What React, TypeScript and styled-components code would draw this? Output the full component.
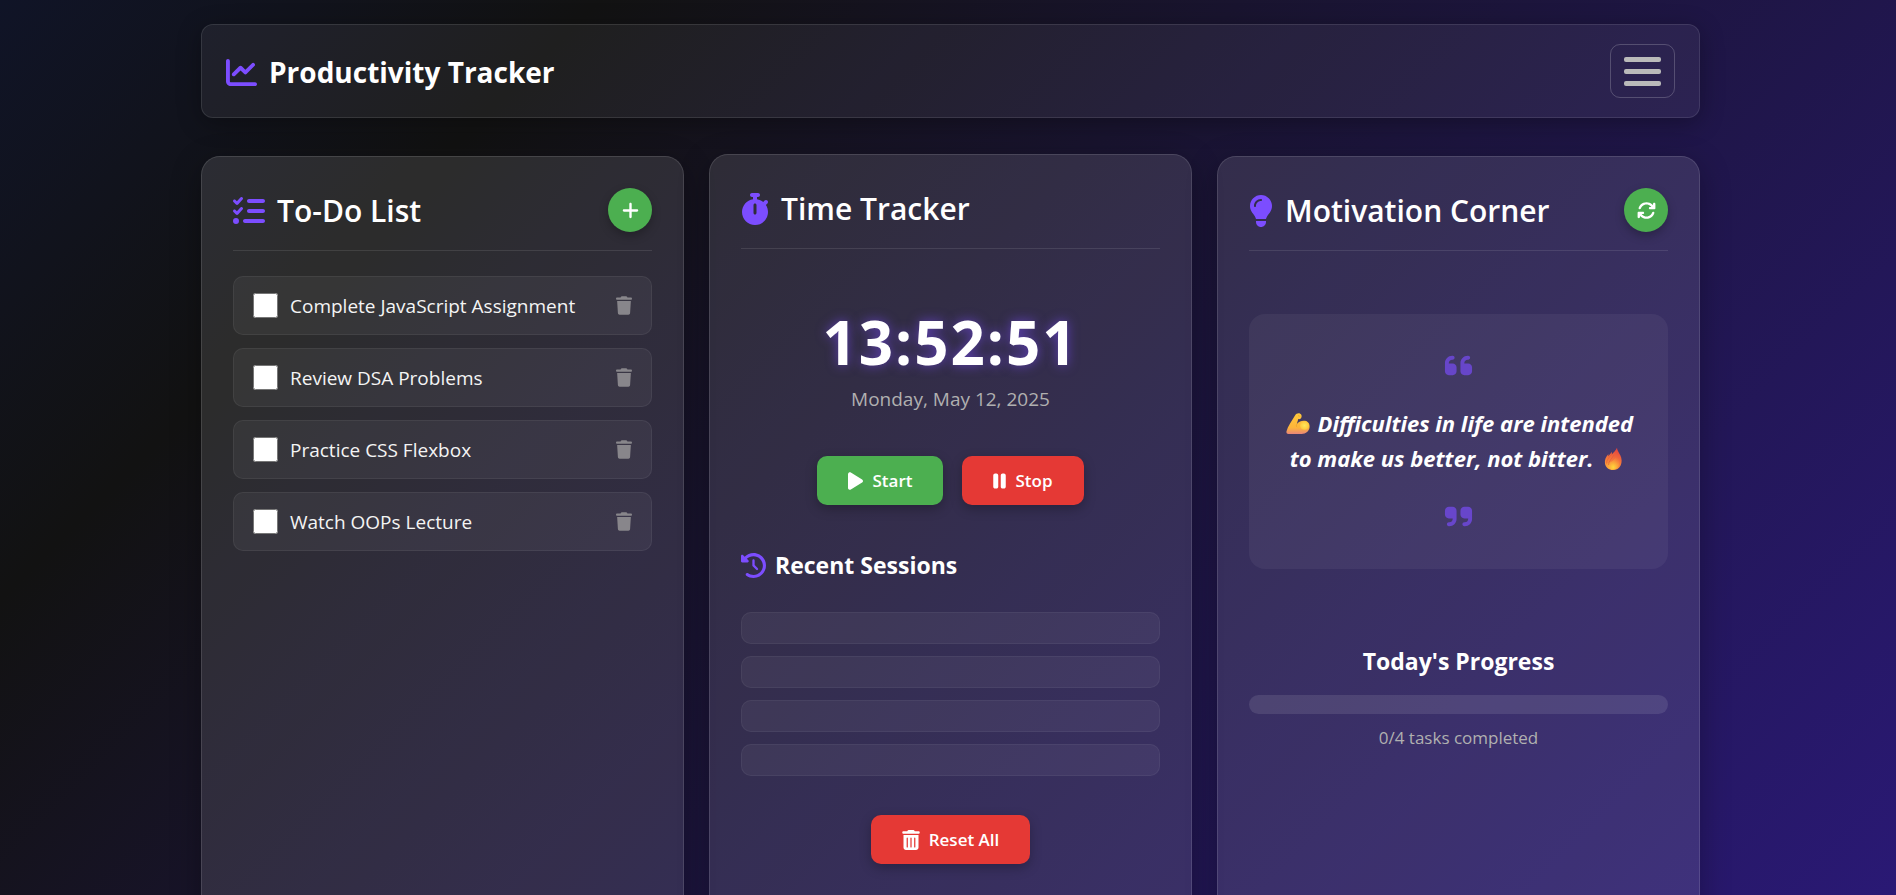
import React, { useState } from "react";
import styled, { createGlobalStyle, css } from "styled-components";
import {
  FaArrowsRotate,
  FaChartLine,
  FaClockRotateLeft,
  FaLightbulb,
  FaListCheck,
  FaPause,
  FaPlay,
  FaPlus,
  FaQuoteLeft,
  FaQuoteRight,
  FaStopwatch,
  FaTrash,
  FaTrashCan,
} from "react-icons/fa6";

const color = {
  accent: "#7c4dff",
  green: "#4caf50",
  red: "#e53935",
  text: "#ffffff",
  muted: "#b0b0b0",
  line: "rgba(255, 255, 255, 0.1)",
};

const GlobalStyle = createGlobalStyle`
  *, *::before, *::after { box-sizing: border-box; }
  body {
    margin: 0;
    background: #121212;
    color: ${color.text};
    font-family: "Open Sans", "Noto Sans", sans-serif;
    font-size: 19px;
  }
  h1, h2, h3, p, ul, blockquote { margin: 0; padding: 0; }
  ul { list-style: none; }
  button { font: inherit; color: inherit; cursor: pointer; }
  svg { display: block; flex: none; }
`;

/* Icons whose drawing is narrower than it is tall get a matching box. */
const StopwatchIcon = styled(FaStopwatch)`width: 28px;`;
const BulbIcon = styled(FaLightbulb)`width: 24px;`;
const PlayIcon = styled(FaPlay)`width: 15px;`;
const PauseIcon = styled(FaPause)`width: 13px;`;
const ResetIcon = styled(FaTrashCan)`width: 18px;`;
const DeleteIcon = styled(FaTrash)`width: 16px;`;

const Page = styled.div`
  min-height: 100vh;
  padding: 24px 0 24px 5px;
  background: linear-gradient(135deg, #101427 0, #121212 424px, #311b92 2432px);
`;

const Container = styled.div`
  width: calc(100% - 48px);
  max-width: 1499px;
  margin: 0 auto;
  display: flex;
  flex-direction: column;
  gap: 38px;
`;

const TopBar = styled.header`
  display: flex;
  align-items: center;
  justify-content: space-between;
  padding: 19px 24px;
  border: 1px solid ${color.line};
  border-radius: 12px;
  background: rgba(255, 255, 255, 0.06);
  box-shadow: 0 5px 25px rgba(0, 0, 0, 0.3);
`;

const Brand = styled.h1`
  display: flex;
  align-items: center;
  gap: 12px;
  padding-top: 2px;
  font-size: 28px;
  line-height: 40px;
  font-weight: 700;
  white-space: nowrap;

  svg { color: ${color.accent}; }
`;

const MenuButton = styled.button`
  display: flex;
  flex-direction: column;
  align-items: center;
  justify-content: center;
  gap: 7px;
  width: 65px;
  height: 54px;
  padding: 0;
  border: 1px solid rgba(255, 255, 255, 0.2);
  border-radius: 10px;
  background: transparent;
`;

const MenuBar = styled.span`
  width: 37px;
  height: 5px;
  border-radius: 2px;
  background: #bababa;
`;

const Columns = styled.main`
  display: grid;
  grid-template-columns: repeat(3, minmax(0, 1fr));
  gap: 25px;
`;

const Card = styled.section<{ $lifted?: boolean }>`
  min-height: 780px;
  padding: 31px;
  border: 1px solid rgba(255, 255, 255, 0.12);
  border-radius: 19px;
  background: rgba(255, 255, 255, 0.11);
  box-shadow: 0 8px 31px rgba(0, 0, 0, 0.3);
  ${(p) => p.$lifted && css`transform: translateY(-2px);`}
`;

const CardHeader = styled.div`
  display: flex;
  align-items: center;
  justify-content: space-between;
  min-height: 63px;
  padding-bottom: 18px;
  border-bottom: 1px solid ${color.line};
`;

const CardTitle = styled.h2`
  display: flex;
  align-items: center;
  gap: 12px;
  padding-top: 2px;
  font-size: 30px;
  line-height: 42px;
  font-weight: 600;
  white-space: nowrap;

  svg { color: ${color.accent}; }
`;

const RoundButton = styled.button`
  display: grid;
  place-items: center;
  width: 44px;
  height: 44px;
  padding: 0;
  border: 0;
  border-radius: 50%;
  background: ${color.green};
  box-shadow: 0 4px 10px rgba(0, 0, 0, 0.25);
`;

const TaskList = styled.ul`
  display: flex;
  flex-direction: column;
  gap: 13px;
  margin-top: 25px;
`;

const Task = styled.li`
  display: flex;
  align-items: center;
  justify-content: space-between;
  height: 59px;
  padding: 0 19px;
  border: 1px solid rgba(255, 255, 255, 0.06);
  border-radius: 10px;
  background: rgba(255, 255, 255, 0.05);
`;

const TaskLabel = styled.label`
  display: flex;
  align-items: center;
  gap: 12px;
  color: #f4f4f4;
  white-space: nowrap;
`;

const TaskCheck = styled.input`
  width: 25px;
  height: 25px;
  margin: 0;
`;

const DeleteButton = styled.button`
  display: flex;
  padding: 0;
  border: 0;
  background: none;
  color: #88868b;
`;

const ClockPanel = styled.div`
  display: flex;
  flex-direction: column;
  align-items: center;
  padding: 56px 0 43px;
`;

const Clock = styled.time`
  font-size: 60px;
  line-height: 75px;
  font-weight: 700;
  letter-spacing: 2px;
  text-shadow: 0 0 12px rgba(124, 77, 255, 0.6);
`;

const DateLine = styled.p`
  margin-top: 5px;
  line-height: 28px;
  color: ${color.muted};
`;

const ButtonRow = styled.div`
  display: flex;
  justify-content: center;
  gap: 19px;
`;

const ActionButton = styled.button<{ $tone: "green" | "red" }>`
  display: flex;
  align-items: center;
  gap: 9px;
  height: 49px;
  padding: 0 31px;
  border: 0;
  border-radius: 10px;
  background: ${(p) => color[p.$tone]};
  box-shadow: 0 4px 12px rgba(0, 0, 0, 0.25);
  font-size: 17px;
  font-weight: 600;
`;

const SubTitle = styled.h3`
  display: flex;
  align-items: center;
  gap: 9px;
  font-size: 23px;
  line-height: 32px;
  font-weight: 700;

  svg { color: ${color.accent}; }
`;

const Sessions = styled.div`
  padding-top: 44px;
`;

const SessionList = styled.ul`
  display: flex;
  flex-direction: column;
  gap: 12px;
  margin: 31px 0 39px;
`;

const SessionRow = styled.li`
  height: 32px;
  border: 1px solid rgba(255, 255, 255, 0.05);
  border-radius: 10px;
  background: rgba(255, 255, 255, 0.05);
`;

const Quote = styled.blockquote`
  display: flex;
  flex-direction: column;
  align-items: center;
  gap: 25px;
  margin-top: 63px;
  padding: 36px 24px 37px;
  border-radius: 16px;
  background: rgba(255, 255, 255, 0.05);

  > svg { color: ${color.accent}; opacity: 0.65; }
`;

const QuoteText = styled.p`
  font-size: 22px;
  line-height: 35px;
  font-weight: 700;
  font-style: italic;
  text-align: center;
  white-space: nowrap;

  svg { display: inline-block; margin: 0 2px; vertical-align: -4px; }
`;

const Progress = styled.div`
  display: flex;
  flex-direction: column;
  align-items: center;
  margin-top: 76px;
`;

const ProgressTrack = styled.div`
  width: 100%;
  height: 19px;
  margin: 18px 0 10px;
  border-radius: 10px;
  overflow: hidden;
  background: rgba(255, 255, 255, 0.1);
`;

const ProgressFill = styled.div`
  height: 100%;
  background: ${color.green};
`;

const ProgressText = styled.p`
  font-size: 17px;
  line-height: 28px;
  color: ${color.muted};
`;

const FlexedArm = () => (
  <svg width="24" height="24" viewBox="0 0 24 24" role="img" aria-label="Flexed arm">
    <defs>
      <linearGradient id="arm" x1="0" y1="0" x2="0" y2="1">
        <stop offset="0" stopColor="#ffc93c" />
        <stop offset="0.7" stopColor="#fdb43a" />
        <stop offset="1" stopColor="#e8857a" />
      </linearGradient>
      <radialGradient id="bicep">
        <stop offset="0" stopColor="#ffe65a" />
        <stop offset="1" stopColor="#ffc83d" />
      </radialGradient>
    </defs>
    <path
      fill="url(#arm)"
      d="M9 3.600C10 1.600 12.500.8 14.200 1.700c1.600.9 1.900 3 .8 4.500-.7.900-1.800 1.200-2.700.9L10.800 12c2.300-2.700 5.400-3.700 8.200-3.200 3 .6 4.900 3.200 4.600 6.200-.4 4-3.600 7-8 7H2.400C.9 22 .1 20.700.5 19.200 1.800 14.500 5.500 9.500 9 3.600z"
    />
    <ellipse cx="18.500" cy="13.500" rx="4.500" ry="4.200" fill="url(#bicep)" />
    <path fill="none" stroke="#e8a02c" strokeWidth="0.800" d="M10.800 12c-.6 1-.5 2.200.2 3.200M12 3.800c.8-.3 1.600 0 1.900.7" />
  </svg>
);

const Fire = () => (
  <svg width="24" height="24" viewBox="0 0 24 24" role="img" aria-label="Fire">
    <defs>
      <linearGradient id="flame" x1="0.700" y1="0" x2="0.400" y2="1">
        <stop offset="0" stopColor="#e2403f" />
        <stop offset="0.550" stopColor="#f4743b" />
        <stop offset="1" stopColor="#fda63c" />
      </linearGradient>
      <radialGradient id="core" cx="0.500" cy="0.850" r="0.700">
        <stop offset="0" stopColor="#ffd83a" />
        <stop offset="1" stopColor="#fba23a" stopOpacity="0" />
      </radialGradient>
    </defs>
    <path
      fill="url(#flame)"
      d="M16 .8c0 2.400 1.800 4.600 3.300 7.400 1.600 3.200 1.900 7.100.3 10.200-1.500 2.900-4.300 4.600-7.600 4.600-4.300 0-7.300-2.600-8-6.300-.6-3.600.8-6.900 3.400-9.700L7.300 9.200 11 4.800l-.2 2.600C12.900 5.500 14.900 3.300 16 .8z"
    />
    <path
      fill="url(#core)"
      d="M16.500 7c.8 3 2.300 5.500 1.900 9-.4 4-3 6.500-6.400 6.500-3.600 0-6.200-2.500-6-6C9.500 16 14.500 12.500 16.500 7z"
    />
    <path
      fill="none"
      stroke="#e2573a"
      strokeWidth="0.600"
      d="M5.500 16.500C5.500 13 8 10.500 10.500 7.500M7.500 18C7.500 14 11 11.500 13 8"
    />
  </svg>
);

const initialTasks = [
  "Complete JavaScript Assignment",
  "Review DSA Problems",
  "Practice CSS Flexbox",
  "Watch OOPs Lecture",
].map((title, id) => ({ id, title, done: false }));

export default function App() {
  const [tasks, setTasks] = useState(initialTasks);
  const done = tasks.filter((t) => t.done).length;

  const toggle = (id: number) =>
    setTasks(tasks.map((t) => (t.id === id ? { ...t, done: !t.done } : t)));
  const remove = (id: number) => setTasks(tasks.filter((t) => t.id !== id));

  return (
    <>
      <GlobalStyle />
      <Page>
        <Container>
          <TopBar>
            <Brand>
              <FaChartLine size={31} />
              Productivity Tracker
            </Brand>
            <MenuButton type="button" aria-label="Menu">
              <MenuBar />
              <MenuBar />
              <MenuBar />
            </MenuButton>
          </TopBar>

          <Columns>
            <Card>
              <CardHeader>
                <CardTitle>
                  <FaListCheck size={32} />
                  To-Do List
                </CardTitle>
                <RoundButton type="button" aria-label="Add task">
                  <FaPlus size={19} />
                </RoundButton>
              </CardHeader>
              <TaskList>
                {tasks.map((task) => (
                  <Task key={task.id}>
                    <TaskLabel>
                      <TaskCheck
                        type="checkbox"
                        checked={task.done}
                        onChange={() => toggle(task.id)}
                      />
                      {task.title}
                    </TaskLabel>
                    <DeleteButton
                      type="button"
                      aria-label={`Delete ${task.title}`}
                      onClick={() => remove(task.id)}
                    >
                      <DeleteIcon size={19} />
                    </DeleteButton>
                  </Task>
                ))}
              </TaskList>
            </Card>

            <Card $lifted>
              <CardHeader>
                <CardTitle>
                  <StopwatchIcon size={32} />
                  Time Tracker
                </CardTitle>
              </CardHeader>
              <ClockPanel>
                <Clock>13:52:51</Clock>
                <DateLine>Monday, May 12, 2025</DateLine>
              </ClockPanel>
              <ButtonRow>
                <ActionButton type="button" $tone="green">
                  <PlayIcon size={20} />
                  Start
                </ActionButton>
                <ActionButton type="button" $tone="red">
                  <PauseIcon size={20} />
                  Stop
                </ActionButton>
              </ButtonRow>
              <Sessions>
                <SubTitle>
                  <FaClockRotateLeft size={25} />
                  Recent Sessions
                </SubTitle>
                <SessionList>
                  <SessionRow />
                  <SessionRow />
                  <SessionRow />
                  <SessionRow />
                </SessionList>
              </Sessions>
              <ButtonRow>
                <ActionButton type="button" $tone="red">
                  <ResetIcon size={20} />
                  Reset All
                </ActionButton>
              </ButtonRow>
            </Card>

            <Card>
              <CardHeader>
                <CardTitle>
                  <BulbIcon size={32} />
                  Motivation Corner
                </CardTitle>
                <RoundButton type="button" aria-label="New quote">
                  <FaArrowsRotate size={19} />
                </RoundButton>
              </CardHeader>
              <Quote>
                <FaQuoteLeft size={31} />
                <QuoteText>
                  <FlexedArm /> Difficulties in life are intended
                  <br />
                  to make us better, not bitter. <Fire />
                </QuoteText>
                <FaQuoteRight size={31} />
              </Quote>
              <Progress>
                <SubTitle>Today's Progress</SubTitle>
                <ProgressTrack
                  role="progressbar"
                  aria-label="Today's progress"
                  aria-valuemin={0}
                  aria-valuemax={tasks.length}
                  aria-valuenow={done}
                >
                  <ProgressFill
                    style={{ width: `${tasks.length ? (done / tasks.length) * 100 : 0}%` }}
                  />
                </ProgressTrack>
                <ProgressText>
                  {done}/{tasks.length} tasks completed
                </ProgressText>
              </Progress>
            </Card>
          </Columns>
        </Container>
      </Page>
    </>
  );
}
